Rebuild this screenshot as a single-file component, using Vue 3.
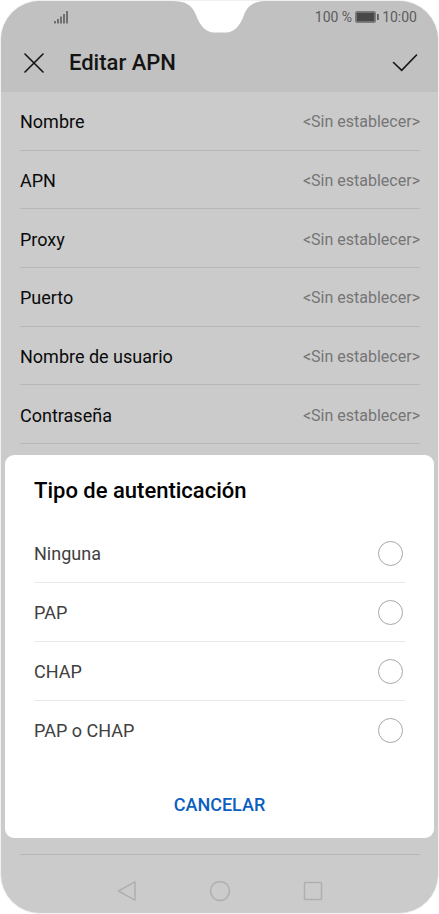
<script setup>
import { ref } from 'vue'

const fields = ['Nombre', 'APN', 'Proxy', 'Puerto', 'Nombre de usuario', 'Contraseña']
const options = ['Ninguna', 'PAP', 'CHAP', 'PAP o CHAP']
const selected = ref('')
</script>

<template>
  <div class="phone">
    <svg class="notch" width="100" height="33" viewBox="0 0 100 33" aria-hidden="true">
      <path d="M0 0V1H3C14 1 22 4 26 15C30 26 36 32.500 44 32.500H56C64 32.500 70 26 74 15C78 4 86 1 97 1H100V0Z" fill="#fff" />
    </svg>

    <header class="top">
      <div class="status">
        <svg class="signal" width="14" height="13" viewBox="0 0 14 13" aria-hidden="true">
          <path d="M1 10V12.500M4 8V12.500M7 5.500V12.500M10 3V12.500M13 0V12.500" stroke="#5c5c5c" stroke-width="1.600" />
        </svg>
        <div class="status-right">
          <span>100 %</span>
          <svg width="24" height="12" viewBox="0 0 24 12" aria-hidden="true">
            <rect x="0.500" y="0.500" width="20" height="11" rx="1.500" fill="#9a9a9a" stroke="#7c7c7c" />
            <rect x="1.500" y="1.500" width="18" height="9" fill="#484848" />
            <rect x="22" y="3" width="1.800" height="6" fill="#5c5c5c" />
          </svg>
          <span>10:00</span>
        </div>
      </div>
      <div class="titlebar">
        <button class="icon" type="button" aria-label="Cerrar">
          <svg width="20" height="20" viewBox="0 0 20 20">
            <path d="M1 1L19 19M19 1L1 19" stroke="#141414" stroke-width="1.600" stroke-linecap="round" />
          </svg>
        </button>
        <h1>Editar APN</h1>
        <button class="icon" type="button" aria-label="Guardar">
          <svg width="26" height="18" viewBox="0 0 26 18">
            <path d="M1.500 8.500L9.700 16.400L24.500 1" fill="none" stroke="#141414" stroke-width="1.600" stroke-linecap="round" />
          </svg>
        </button>
      </div>
    </header>

    <main>
      <ul class="fields">
        <li v-for="name in fields" :key="name">
          <span>{{ name }}</span>
          <span class="value">&lt;Sin establecer&gt;</span>
        </li>
      </ul>
      <div class="covered"></div>
    </main>

    <nav class="nav">
      <button class="icon" type="button" aria-label="Atrás">
        <svg width="20" height="22" viewBox="0 0 20 22">
          <path d="M18 1.800V20.200L1.500 11Z" fill="none" stroke="#afafaf" stroke-width="1.500" stroke-linejoin="round" />
        </svg>
      </button>
      <button class="icon" type="button" aria-label="Inicio">
        <svg width="22" height="22" viewBox="0 0 22 22">
          <circle cx="11" cy="11" r="9.500" fill="none" stroke="#afafaf" stroke-width="1.500" />
        </svg>
      </button>
      <button class="icon" type="button" aria-label="Recientes">
        <svg width="20" height="22" viewBox="0 0 20 22">
          <rect x="1.500" y="2.500" width="17" height="17" rx="0.500" fill="none" stroke="#afafaf" stroke-width="1.500" />
        </svg>
      </button>
    </nav>

    <section class="dialog" role="dialog" aria-labelledby="dialog-title">
      <h2 id="dialog-title">Tipo de autenticación</h2>
      <div class="options">
        <label v-for="option in options" :key="option" class="option">
          <span>{{ option }}</span>
          <input v-model="selected" type="radio" name="auth" :value="option" />
        </label>
      </div>
      <button class="cancel" type="button">CANCELAR</button>
    </section>
  </div>
</template>

<style>
body {
  background: #fff;
}
</style>

<style scoped>
.phone {
  position: relative;
  box-sizing: border-box;
  min-height: 914px;
  display: flex;
  flex-direction: column;
  border: 1px solid #f0f2f1;
  border-radius: 40px;
  overflow: hidden;
  background: #cbcbcb;
  font-family: Roboto, "Liberation Sans", sans-serif;
  color: #0a0a0a;
}

.notch {
  position: absolute;
  top: -1px;
  left: 50%;
  margin-left: -50px;
}

.top {
  background: #c1c1c1;
}

.status {
  display: flex;
  justify-content: space-between;
  align-items: center;
  height: 32px;
  padding: 0 21px 0 53px;
  font-size: 14px;
  color: #5c5c5c;
}

.status-right {
  display: flex;
  align-items: center;
  gap: 3px;
}

.titlebar {
  display: flex;
  align-items: center;
  box-sizing: border-box;
  height: 59px;
  padding: 1px 20px 0 23px;
}

h1 {
  flex: 1;
  margin: 0 0 0 25px;
  font-size: 22px;
  font-weight: 500;
  line-height: 28px;
  color: #141414;
}

.icon {
  display: flex;
  padding: 0;
  border: 0;
  background: none;
}

.fields {
  display: grid;
  grid-auto-rows: 1fr;
  min-height: 352px;
  margin: 0 18px 0 19px;
  padding: 0;
  list-style: none;
  font-size: 18px;
}

.fields li {
  display: flex;
  align-items: center;
  justify-content: space-between;
  padding-top: 2px;
  border-bottom: 1px solid #b7b7b7;
}

.value {
  font-size: 16px;
  color: #757575;
}

.covered {
  height: 411px;
  margin: 0 18px 0 19px;
  box-sizing: border-box;
  border-bottom: 1px solid #b7b7b7;
}

.nav {
  flex: 1;
  display: flex;
  justify-content: center;
  align-items: center;
  gap: 72px;
  padding-top: 13px;
}

.dialog {
  position: absolute;
  left: 4px;
  right: 4px;
  bottom: 75px;
  display: flex;
  flex-direction: column;
  padding: 20px 29px 15px;
  border-radius: 9px;
  background: #fff;
}

h2 {
  margin: 0 0 17px;
  font-size: 22px;
  font-weight: 500;
  line-height: 32px;
  color: #000;
}

.option {
  display: flex;
  align-items: center;
  justify-content: space-between;
  box-sizing: border-box;
  height: 59px;
  padding-right: 2px;
  border-bottom: 1px solid #e9e9e9;
  font-size: 18px;
  color: #404040;
}

.option:last-child {
  border-bottom: 0;
}

.option input {
  appearance: none;
  box-sizing: border-box;
  width: 25px;
  height: 25px;
  margin: 0;
  border: 1px solid #a8a8a8;
  border-radius: 50%;
  background: #fff;
}

.option input:checked {
  border: 7px solid #0a5fc0;
}

.cancel {
  align-self: center;
  margin-top: 27px;
  padding: 0 12px;
  border: 0;
  background: none;
  font-family: inherit;
  font-size: 18px;
  font-weight: 500;
  line-height: 36px;
  color: #0a5fc0;
}
</style>
